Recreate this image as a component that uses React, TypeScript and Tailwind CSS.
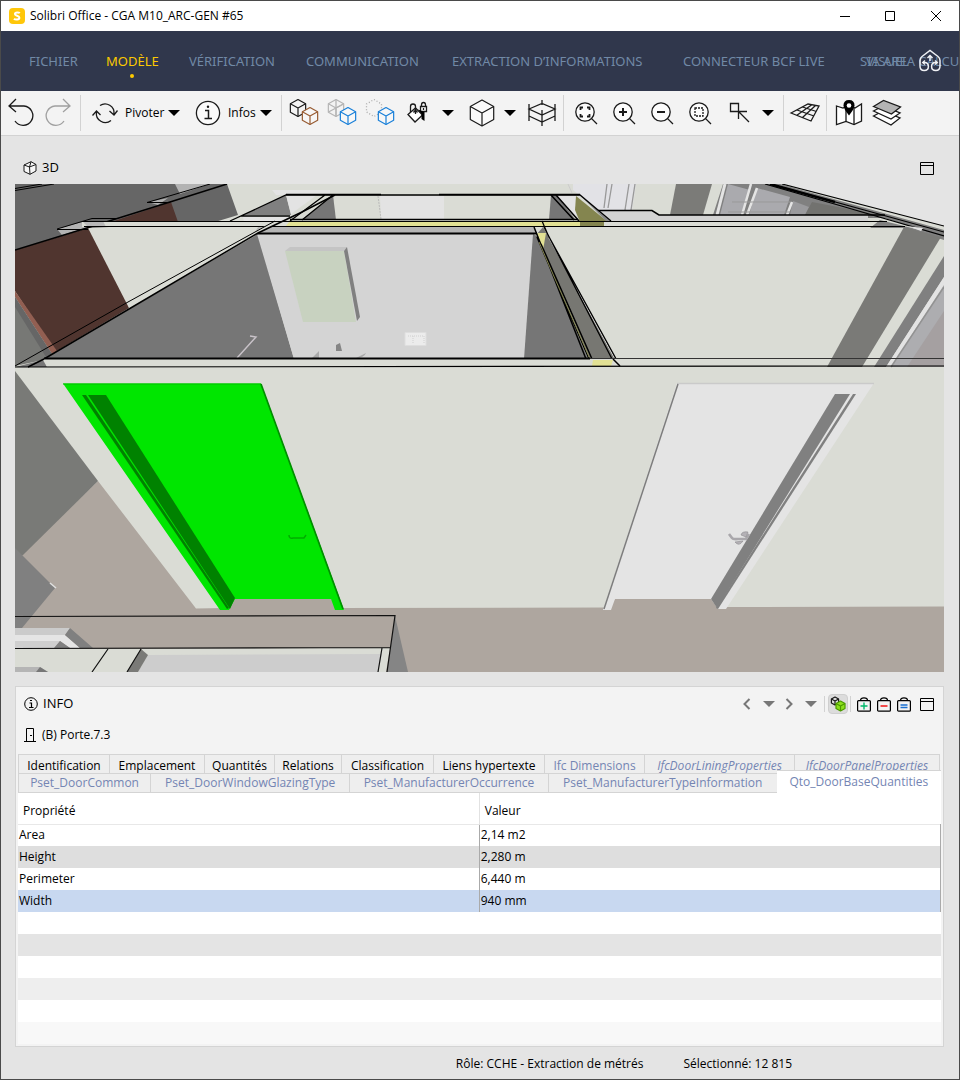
import { useState, type ReactNode } from 'react';

const MENU = [
  'FICHIER',
  'MODÈLE',
  'VÉRIFICATION',
  'COMMUNICATION',
  'EXTRACTION D’INFORMATIONS',
  'CONNECTEUR BCF LIVE',
];

const TABS_TOP = [
  { label: 'Identification', style: 'text-black' },
  { label: 'Emplacement', style: 'text-black' },
  { label: 'Quantités', style: 'text-black' },
  { label: 'Relations', style: 'text-black' },
  { label: 'Classification', style: 'text-black' },
  { label: 'Liens hypertexte', style: 'text-black' },
  { label: 'Ifc Dimensions', style: 'text-[#7485b3]' },
  { label: 'IfcDoorLiningProperties', style: 'text-[#7485b3] italic' },
  { label: 'IfcDoorPanelProperties', style: 'text-[#7485b3] italic' },
];

const TABS_BOTTOM = [
  'Pset_DoorCommon',
  'Pset_DoorWindowGlazingType',
  'Pset_ManufacturerOccurrence',
  'Pset_ManufacturerTypeInformation',
  'Qto_DoorBaseQuantities',
];

const ROWS = [
  { name: 'Area', value: '2,14 m2', bg: 'bg-white' },
  { name: 'Height', value: '2,280 m', bg: 'bg-[#dedede]' },
  { name: 'Perimeter', value: '6,440 m', bg: 'bg-white' },
  { name: 'Width', value: '940 mm', bg: 'bg-[#c8d8f0]' },
];

const EMPTY_ROWS = ['bg-white', 'bg-[#e4e4e4]', 'bg-white', 'bg-[#eeeeee]', 'bg-white', 'bg-[#f8f8f8]'];

function Cube({ cx, cy, r, color = '#1a1a1a', fill = 'none' }: { cx: number; cy: number; r: number; color?: string; fill?: string }) {
  const w = r * 0.9;
  const h = r * 0.5;
  return (
    <g stroke={color} fill={fill} strokeWidth="1.2" strokeLinejoin="round">
      <path d={`M${cx} ${cy - r}L${cx + w} ${cy - h}V${cy + h}L${cx} ${cy + r}L${cx - w} ${cy + h}V${cy - h}Z`} />
      <path d={`M${cx - w} ${cy - h}L${cx} ${cy}L${cx + w} ${cy - h}M${cx} ${cy}V${cy + r}`} fill="none" />
    </g>
  );
}

function Icon({ children }: { children: ReactNode }) {
  return (
    <svg viewBox="0 0 32 32" className="size-8 shrink-0" fill="none" stroke="#1a1a1a" strokeWidth="1.3">
      {children}
    </svg>
  );
}

function ToolButton({ label, children }: { label: string; children: ReactNode }) {
  return (
    <button type="button" aria-label={label} className="flex h-10 w-[38px] shrink-0 items-center justify-center">
      <Icon>{children}</Icon>
    </button>
  );
}

function Caret({ label }: { label: string }) {
  return (
    <button type="button" aria-label={label} className="flex h-10 w-3 shrink-0 items-center justify-center">
      <svg viewBox="0 0 12 6" className="h-1.5 w-3" fill="#000">
        <path d="M0 0H12L6 6Z" />
      </svg>
    </button>
  );
}

function Separator() {
  return <span className="h-9 w-px shrink-0 bg-[#d2d2d2]" />;
}

function Lens() {
  return (
    <g>
      <circle cx="15" cy="15" r="9.2" fill="#fbfbfb" />
      <path d="M21.6 21.6L27 27" />
    </g>
  );
}

function WindowIcon() {
  return (
    <svg viewBox="0 0 14 13" className="h-[13px] w-3.5" fill="none" stroke="#000">
      <path d="M0.5 0.5H13.5V12.5H0.5ZM0.5 3.5H13.5" />
    </svg>
  );
}

function TitleBar() {
  return (
    <header className="flex h-[30px] items-center bg-white pl-2">
      <svg viewBox="0 0 16 16" className="size-4">
        <rect width="16" height="16" rx="4" fill="#ffc70a" />
        <path d="M10.8 5.2C10 4.3 6 3.8 5.9 6C5.9 8 10.4 7.4 10.4 9.7C10.4 12 6.2 11.9 5 10.7" fill="none" stroke="#fff" strokeWidth="2" />
      </svg>
      <h1 className="ml-[5px] flex-1 font-['Open_Sans'] text-[12px] whitespace-nowrap">Solibri Office - CGA M10_ARC-GEN #65</h1>
      <button type="button" aria-label="Réduire" className="flex h-full w-[45px] items-center justify-center">
        <svg viewBox="0 0 12 12" className="size-3" stroke="#000"><path d="M1 6.5H11" /></svg>
      </button>
      <button type="button" aria-label="Agrandir" className="flex h-full w-[46px] items-center justify-center">
        <svg viewBox="0 0 12 12" className="size-3" fill="none" stroke="#000"><path d="M1.5 1.5H10.5V10.5H1.5Z" /></svg>
      </button>
      <button type="button" aria-label="Fermer" className="flex h-full w-[46px] items-center justify-center">
        <svg viewBox="0 0 12 12" className="size-3" stroke="#000"><path d="M1 1L11 11M11 1L1 11" /></svg>
      </button>
    </header>
  );
}

function MenuBar() {
  const [active, setActive] = useState('MODÈLE');
  return (
    <nav className="relative grid h-[60px] grid-cols-[77px_83px_117px_146px_231px_177px_auto] items-center justify-items-start overflow-hidden bg-[#30374c] pt-0.5 pl-7 font-['Noto_Sans'] text-[13px] text-[#7189a6]">
      {MENU.map((item) => (
        <button
          key={item}
          type="button"
          onClick={() => setActive(item)}
          className={`relative whitespace-nowrap ${item === active ? 'text-[#fdc900]' : ''}`}
        >
          {item}
          {item === active && <span className="absolute -bottom-1.5 left-1/2 size-1 -translate-x-1/2 rounded-full bg-[#fdc900]" />}
        </button>
      ))}
      {/* the last two entries share the same slot */}
      <span className="relative whitespace-nowrap">
        <button type="button">SIA AREA CALCUL</button>
        <button type="button" className="absolute top-0 left-1.5">VISUEL</button>
      </span>
      <svg viewBox="0 0 24 24" className="absolute top-[18px] right-[17px] size-6" fill="none" stroke="#f0f2f5" strokeWidth="1.5">
        <path d="M2 11.5Q2 9 4 7.500L12 1.500L20 7.500Q22 9 22 11.500V17Q22 21.500 17.800 21.500Q13.600 21.500 13.600 17.500Q13.600 13.500 17.500 13.500H19M2 11.500V17Q2 21.500 6.200 21.500Q10.400 21.500 10.400 17.500Q10.400 13.500 6.500 13.500H5" />
        <path d="M12 12V6.500M9.500 9L12 6.500L14.500 9M7 11.500L4.800 13.500L7 15.500M17 11.500L19.200 13.500L17 15.500" />
      </svg>
    </nav>
  );
}

function Toolbar() {
  return (
    <div className="flex h-[45px] items-center overflow-hidden border-b border-[#d2d2d2] bg-[#f3f3f3] font-['Open_Sans'] text-[12px]">
      <ToolButton label="Annuler">
        <path d="M12 2L5 9L12 15M5 9H20A9.700 9.700 0 1 1 11 24" />
      </ToolButton>
      <ToolButton label="Rétablir">
        <path d="M21 2L28 9L21 15M28 9H13A9.700 9.700 0 1 0 22 24" stroke="#a0a0a0" />
      </ToolButton>
      <span className="ml-[3px] flex"><Separator /></span>
      <button type="button" className="ml-2 flex w-[74px] shrink-0 items-center">
        <Icon>
          <path d="M11 8.500A9 9 0 0 1 25 17M20.500 14L25 18L28.500 13.500M22 23.500A9 9 0 0 1 7.500 15M3.500 18.500L7.500 14L11.500 18" />
        </Icon>
        <span className="ml-1 whitespace-nowrap">Pivoter</span>
      </button>
      <span className="ml-[5px] flex"><Caret label="Options de pivot" /></span>
      <button type="button" className="ml-3 flex w-16 shrink-0 items-center">
        <Icon>
          <circle cx="16" cy="16" r="11.600" fill="#fafafa" />
          <path d="M13 13.500H16.500V21.500M12.500 21.500H20" strokeWidth="1.500" />
          <circle cx="16" cy="9.800" r="1.200" fill="#1a1a1a" stroke="none" />
        </Icon>
        <span className="ml-1 whitespace-nowrap">Infos</span>
      </button>
      <span className="ml-1 flex"><Caret label="Options des infos" /></span>
      <span className="ml-[9px] flex"><Separator /></span>
      <span className="ml-[3px] flex">
        <ToolButton label="Ajouter des composants">
          <Cube cx={10} cy={11} r={8.5} color="#1a1a1a" fill="#f3f3f3" />
          <Cube cx={22} cy={19} r={8.5} color="#985c33" fill="#f7f7f7" />
        </ToolButton>
        <ToolButton label="Transparence">
          <Cube cx={10} cy={11} r={8.5} color="#b5b5b5" />
          <path d="M10 2.500V19.500M2.500 15L17.500 7" stroke="#b5b5b5" />
          <Cube cx={22} cy={19} r={8.5} color="#1a80d9" fill="#f7f7f7" />
        </ToolButton>
        <ToolButton label="Masquer">
          <path d="M10 2.500L17.500 7V15L10 19.500L2.500 15V7Z" stroke="#aaa" strokeDasharray="1 2" />
          <Cube cx={22} cy={19} r={8.5} color="#1a80d9" fill="#f7f7f7" />
        </ToolButton>
        <ToolButton label="Verrouiller les couleurs">
          <path d="M6 17.500L13.500 11L20.500 18L13 25Z" fill="#fff" />
          <path d="M8.500 15V9.500Q8.500 7 11 7Q13.500 7 13.500 9.500V17" />
          <path d="M11.500 15.500L13.500 13L15.500 15.500" />
          <path d="M19.500 9V8Q19.500 5.500 21.500 5.500Q23.500 5.500 23.500 8V9M18.500 9.500H24.500V14.500H18.500Z" fill="#fff" />
          <path d="M16 12.500L22.500 15V24L19.500 22V17Z" fill="#000" stroke="none" />
          <path d="M21.500 11V13" />
        </ToolButton>
      </span>
      <span className="ml-[5px] flex"><Caret label="Options de couleur" /></span>
      <span className="ml-[9px] flex">
        <ToolButton label="Vue 3D">
          <Cube cx={16} cy={16} r={13} fill="#fafafa" />
        </ToolButton>
      </span>
      <span className="ml-[3px] flex"><Caret label="Options de vue" /></span>
      <span className="ml-[7px] flex">
        <ToolButton label="Coupe">
          <path d="M3 7V24M29 7V24M16 3V8M16 13V29M3 12L16 6.500L29 12L16 18ZM3 19L16 25L29 19" />
        </ToolButton>
      </span>
      <span className="ml-[2px] flex"><Separator /></span>
      <span className="ml-[3px] flex">
        <ToolButton label="Zoom étendu">
          <Lens />
          <path d="M10.500 13V10.500H13M17 10.500H19.500V13M19.500 17V19.500H17M13 19.500H10.500V17" strokeWidth="1.800" />
        </ToolButton>
        <ToolButton label="Zoom avant">
          <Lens />
          <path d="M11 15H19M15 11V19" strokeWidth="2" />
        </ToolButton>
        <ToolButton label="Zoom arrière">
          <Lens />
          <path d="M11 15H19" strokeWidth="2" />
        </ToolButton>
        <ToolButton label="Zoom fenêtre">
          <Lens />
          <path d="M11 11H19V19H11Z" strokeDasharray="2 1" />
        </ToolButton>
        <ToolButton label="Sélection">
          <path d="M8.500 6.500H16.500V14.500H8.500ZM16.500 22V14.500H25M16.500 14.500L27 25" />
        </ToolButton>
      </span>
      <span className="ml-[5px] flex"><Caret label="Options de sélection" /></span>
      <span className="ml-[9px] flex"><Separator /></span>
      <span className="ml-0.5 flex">
        <ToolButton label="Grille">
          <path d="M2 16L19 7L30 9L22 24ZM7.500 18.500L22.500 8M13.500 20.500L26.500 8.500M8 13L25 19M13.500 10L27.500 14.500" />
        </ToolButton>
      </span>
      <span className="ml-[2px] flex"><Separator /></span>
      <span className="ml-[3px] flex">
        <ToolButton label="Carte">
          <path d="M3.500 9L10 11L16 8L22 11L28.500 7V24L21 27.500L13 24.500L3.500 27.500Z" fill="#fff" />
          <path d="M13 10V24.500M21 10.500V27.500" />
          <path d="M16 3Q21.500 3 21.500 8.500Q21.500 11.500 16 18.500Q10.500 11.500 10.500 8.500Q10.500 3 16 3Z" fill="#000" stroke="none" />
          <circle cx="16" cy="8.500" r="2.300" fill="#fff" stroke="none" />
        </ToolButton>
        <ToolButton label="Calques">
          <path d="M2.500 19L12 14L29 21L20 28Z" fill="#fff" />
          <path d="M2.500 14L12 9L29 16L20 22Z" fill="#fff" />
          <path d="M2.500 9.500L12.500 3.500L29.500 10L20.500 17Z" fill="#b4b4b4" />
        </ToolButton>
      </span>
    </div>
  );
}

// Scene coordinates are kept in viewport units, the drawing scales with its panel
function Scene() {
  return (
    <svg viewBox="15 184 929 488" className="block h-auto w-full" role="img" aria-label="Vue 3D du modèle">
      <rect x="15" y="184" width="929" height="488" fill="#dadcd5" />

      {/* upper left rooms */}
      <path d="M15 184H227L238 215L215 222L88 228L15 250Z" fill="#666" />
      <path d="M175 184H210L180 194ZM148 202L168 198L158 205ZM57 229L82 222L92 226L62 235Z" fill="#b3b3b3" />
      <path d="M114 221L171 202L178 222Z" fill="#50352f" />
      <path d="M15 250L88 228L129 308L55 352L15 291Z" fill="#50352f" />
      <path d="M15 291L57 351L52 354L15 297Z" fill="#925f52" />
      <path d="M15 297L52 354L43 360L15 366Z" fill="#777875" />
      <path d="M15 297L52 354L46 357L15 307Z" fill="#666" />
      <path d="M82 222H103L105 227H92Z" fill="#bcbcbc" />
      <path d="M43 360L47 367H15Z" fill="#777" />
      <g fill="none" stroke="#000">
        <path d="M15 188.500L42 184M15 190.500L54 184M147 202.500L210 184" />
        <path d="M15 250L90 227L170 202L227 184" strokeWidth="1.500" />
        <path d="M57 229L92 218.500H116" />
        <path d="M147 202.500H170M57 229.500H88" />
      </g>

      {/* back rooms behind the long wall */}
      <path d="M272 190H330V195H276Z" fill="#e4e4e4" />
      <path d="M243 215L286 195L291 215Z" fill="#808080" />
      <path d="M286 195H317L291 214Z" fill="#e3e3e3" />
      <path d="M243 217H290L280 222H244Z" fill="#e3e3e3" />
      <path d="M302 220L333 195L336 220Z" fill="#767676" />
      <path d="M380 196H444V219H381Z" fill="#e3e3e3" />
      <path d="M378 196L381 219" stroke="#bbb" strokeDasharray="2 1" />
      <path d="M551 195H556L576 220H549Z" fill="#767676" />
      <path d="M556 195H576V219Z" fill="#e4e4e4" />
      <path d="M576 196L608 222H580L575 210Z" fill="#84854f" />
      <path d="M580 195L586 195L611 221H606Z" fill="#8a8a8a" />
      <path d="M573 184H636L632 210H598L573 190Z" fill="#e2e2e6" />
      <path d="M607 184L604 208M612 184L608 208M629 184L625 210M635 184L631 210" stroke="#999" strokeWidth="1.300" />
      <path d="M568 184L572 193" stroke="#ccc" />
      <path d="M676 184H712L703 215H670Z" fill="#7b7b78" />
      <path d="M723 184H780L944 230V238L885 218H712Z" fill="#808080" />
      <path d="M725 184L717 215" stroke="#e4e4e4" strokeWidth="3" />
      <path d="M728 184L750 190L742 215H720Z" fill="#aaaaae" />
      <path d="M757 188L790 197L784 215H749Z" fill="#aaaaae" />
      <path d="M793 201L809 207L805 215H790Z" fill="#9a9a9d" />
      <path d="M751 184L742 215M757 188L747 215M792 202L787 215" stroke="#e4e4e4" strokeWidth="2.500" />
      <path d="M812 202L880 215H805Z" fill="#72726f" />
      <path d="M732 202H790M728 212H790" stroke="#999" />
      <path d="M598 211H652L658 215H868V221H610Z" fill="#d3d3d3" />
      <path d="M598 210.500H652L659 215H885" fill="none" stroke="#000" strokeWidth="1.500" />

      {/* long wall top and cavity */}
      <path d="M82 221H885V227H82Z" fill="#dadcd5" />
      <path d="M82 221H103L106 227H88Z" fill="#b8b8b8" />
      <path d="M290 221H604V227H285Z" fill="#e2e194" />
      <path d="M580 221H604V227H580Z" fill="#84854f" />
      <path d="M258 227H533L537 234H254Z" fill="#b5b5b5" />
      <path d="M784 184H944V226Z" fill="#e4e4e4" />
      <path d="M880 220L944 236V240L905 228H870Z" fill="#808080" />
      <g fill="none" stroke="#000">
        <path d="M82 221.500H887M84 226.500H905" />
        <path d="M230 221L286 195H580L611 221M333 195L302 220M325 195L290 221M241 216H290" strokeWidth="1.300" />
        <path d="M551 195L574 220M556 195L579 221M286 194.500H381M439 194.500H580" strokeWidth="1.500" />
        <path d="M290 219.500H578" strokeWidth="1.300" />
        <path d="M782 184L944 226M770 184L944 232M765 184L838 205L944 236" strokeWidth="1.200" />
      </g>
      <path d="M770 184L835 202" stroke="#000" strokeWidth="2.500" />
      <path d="M907 226L923 228L921 231Z" fill="#e4e4e4" />

      {/* open room */}
      <path d="M44 359L258 234L294 359Z" fill="#767676" />
      <path d="M257 234H533L525 359H294Z" fill="#d4d4d4" />
      <path d="M285 251L290 247H347L344 251Z" fill="#c4c4c4" />
      <path d="M285 251H344L356 322H303Z" fill="#c8d2c0" />
      <path d="M344 251L347 247L360 317L357 321Z" fill="#808080" />
      <path d="M405 332.500H426V345.500H405Z" fill="#ececec" stroke="#dedede" />
      <path d="M408 336H424V343M413 336V343" fill="none" stroke="#d0d0d0" strokeDasharray="1 1" />
      <path d="M336 345L340 343L342 351H336Z" fill="#858585" />
      <path d="M237 358L256 337L250 336" fill="none" stroke="#c9c3c9" strokeWidth="1.500" />
      <path d="M312 358L319 351V358ZM356 358Q364 358 366 353" fill="#aaa" />
      <path d="M533 234L537 236L588 359H524Z" fill="#767676" />
      <path d="M543 227L620 366H593L537 234Z" fill="#777772" />
      <path d="M537 233H546L543 250Z" fill="#e2e194" />
      <path d="M615 359L549 238" stroke="#e4e4e4" strokeWidth="1" />
      <g fill="none" stroke="#000">
        <path d="M534 227L586 359M537 237L589 359M541 244L592 359" strokeWidth="1.500" />
        <path d="M539 242L590 359" stroke="#84854f" strokeWidth="1" />
        <path d="M542 221L548 235L620 366M544 227L612 359" strokeWidth="1.300" />
        <path d="M257 233.500H537" strokeWidth="2" />
      </g>
      <path d="M129 308L258 233L280 222L263 227L128 302Z" fill="#dadcd5" />
      <path d="M15 366L128 302L275 221" fill="none" stroke="#000" />
      <path d="M28 367L44 359L129 309L258 233L302 212L335 195" fill="none" stroke="#000" strokeWidth="1.500" />

      {/* right hand wall */}
      <path d="M904 227L941 237L862 367H827Z" fill="#7a7a77" />
      <path d="M944 256V277L886 367H874Z" fill="#808080" />
      <path d="M944 277V285L891 367H886Z" fill="#e3e3e3" />
      <path d="M944 285V367H891Z" fill="#adadb0" />
      <path d="M944 311V367H907Z" fill="#a5a0a1" />
      <path d="M944 287L891 367" stroke="#929292" strokeWidth="1.500" />

      {/* front wall top edge */}
      <path d="M44 359H827V367H47Z" fill="#dadcd5" />
      <path d="M593 360H613L611 366H592Z" fill="#e2e194" />
      <path d="M613 359L620 366" stroke="#000" strokeWidth="1.500" />
      <path d="M44 358.500H590" stroke="#000" strokeWidth="1.800" />
      <path d="M590 358.500H944" stroke="#333" />
      <path d="M15 367L944 366" stroke="#000" strokeWidth="1.200" />

      {/* floor and left side */}
      <path d="M98 481L196 608.500L225 608L235 599H331L337 608L607 607.500L615 599H711L717 607L944 606.500V672H15V560Z" fill="#aea69f" />
      <path d="M15 371L98 481L23 555L15 560Z" fill="#797a77" />
      <path d="M15 548L55 588L22 628L15 636Z" fill="#808080" />
      <path d="M50 583L56 588" stroke="#e0e0e0" strokeWidth="1.500" />

      {/* selected door */}
      <path d="M63 383.500H261L344 610H335L331 599H235L229 610H220Z" fill="#00e600" />
      <path d="M63 384H261" stroke="#00c000" />
      <path d="M261 384L343 609" stroke="#008f00" strokeWidth="1.700" />
      <path d="M88 395H106L235 598L230 609Z" fill="#008200" />
      <path d="M82 395H86L229 608L227 609Z" fill="#008200" />
      <path d="M289 535Q289 539 293 538H304L306 535" fill="none" stroke="#00ad00" strokeWidth="1.500" />

      {/* white door */}
      <path d="M677 383H874L726 609H718L711 599H615L611 610H603Z" fill="#e4e4e4" />
      <path d="M677 383.500H874" stroke="#cacaca" strokeWidth="1.500" />
      <path d="M678 384L604 609" stroke="#7d7d7d" strokeWidth="1.500" />
      <path d="M835 394H850L717 608L711 599Z" fill="#808080" />
      <path d="M853 394H856L718 609L716 608Z" fill="#808080" />
      <path d="M729 534L732 538Q733 539.500 738 539H746L749 534" fill="none" stroke="#a9a7ab" strokeWidth="2.600" />
      <path d="M741 535Q742 531 748 532L746 537ZM735 542Q739 547 743 541Z" fill="#b4b1b6" stroke="#8d8b8f" strokeWidth="0.600" />

      {/* lower wall and windows */}
      <path d="M15 628H70L65 635H15Z" fill="#cbcbcb" />
      <path d="M15 635H65L80 648H70L60 641H15Z" fill="#e5e5e5" />
      <path d="M15 641H60L55 648H15Z" fill="#cfcfcf" />
      <path d="M70 628L93 648H80L65 635ZM60 641L70 648H54Z" fill="#808080" />
      <path d="M15 649L390 648L386 672H15Z" fill="#dadcd5" />
      <path d="M148 655L382 654L378 672H138Z" fill="#cdcdcd" />
      <path d="M141 649L148 655L138 672H127Z" fill="#7a7a77" />
      <path d="M15 667H40L48 672H15Z" fill="#b5b5b5" />
      <path d="M36 672L40 667L48 672Z" fill="#777" />
      <path d="M395 616L408 672H387Z" fill="#858585" />
      <path d="M15 616.500L395 615.500L387 672M15 648.500L390 647.500M108 649L92 672M141 649L127 672M382 648L378 672" fill="none" stroke="#111" strokeWidth="1.200" />
    </svg>
  );
}

function BasketIcon({ sign, color }: { sign: string; color: string }) {
  return (
    <svg viewBox="0 0 14 15" className="h-[15px] w-3.5" fill="none" stroke="#000" strokeWidth="1.200">
      <rect x="0.600" y="3.600" width="12.800" height="10.600" rx="1" />
      <path d="M3.500 3.500Q3.500 0.800 7 0.800Q10.500 0.800 10.500 3.500" />
      <path d={sign} stroke={color} strokeWidth="1.400" />
    </svg>
  );
}

function InfoPanel() {
  const [tab, setTab] = useState('Qto_DoorBaseQuantities');
  return (
    <section className="mt-3.5 mr-[15px] ml-3.5 border border-[#d4d4d4] bg-[#f3f3f3] px-0.5 pb-0.5">
      <div className="flex h-[34px] items-center pr-[7px] pl-1.5">
        <svg viewBox="0 0 14 14" className="size-3.5" fill="none" stroke="#000">
          <circle cx="7" cy="7" r="6.300" />
          <path d="M5.500 6H7.500V10.500M5 10.500H9.500M6 3.500H8" strokeWidth="1.200" />
        </svg>
        <h2 className="ml-[5px] flex-1 text-[13px]">INFO</h2>
        <div className="flex items-center text-[#777]">
          <button type="button" aria-label="Précédent">
            <svg viewBox="0 0 8 12" className="h-3 w-2" fill="none" stroke="currentColor" strokeWidth="2"><path d="M6.500 1L1.500 6L6.500 11" /></svg>
          </button>
          <button type="button" aria-label="Historique précédent" className="ml-3">
            <svg viewBox="0 0 12 6" className="h-1.5 w-3" fill="currentColor"><path d="M0 0H12L6 6Z" /></svg>
          </button>
          <button type="button" aria-label="Suivant" className="ml-2.5">
            <svg viewBox="0 0 8 12" className="h-3 w-2" fill="none" stroke="currentColor" strokeWidth="2"><path d="M1.500 1L6.500 6L1.500 11" /></svg>
          </button>
          <button type="button" aria-label="Historique suivant" className="ml-3">
            <svg viewBox="0 0 12 6" className="h-1.5 w-3" fill="currentColor"><path d="M0 0H12L6 6Z" /></svg>
          </button>
          <span className="ml-[7px] h-4 w-px bg-[#d2d2d2]" />
          <button type="button" aria-label="Suivre la sélection" className="ml-[3px] flex size-5 items-center justify-center rounded-sm border border-[#cfcfcf] bg-[#dcdcdc]">
            <svg viewBox="0 0 16 16" className="size-4">
              <Cube cx={5} cy={5} r={4} />
              <Cube cx={10.5} cy={10} r={5} color="#4c9a00" fill="#8ce01c" />
            </svg>
          </button>
          <span className="ml-0.5 h-4 w-px bg-[#d2d2d2]" />
          <button type="button" aria-label="Ajouter au panier" className="ml-1.5"><BasketIcon sign="M3.500 9H10.500M7 5.500V12.500" color="#00b86b" /></button>
          <button type="button" aria-label="Retirer du panier" className="ml-1.5"><BasketIcon sign="M3.500 9H10.500" color="#f00000" /></button>
          <button type="button" aria-label="Définir le panier" className="ml-1.5"><BasketIcon sign="M3.500 8H10.500M3.500 10.500H10.500" color="#1a6fd0" /></button>
          <button type="button" aria-label="Agrandir le panneau" className="ml-[9px]"><WindowIcon /></button>
        </div>
      </div>
      <div className="flex h-[33px] items-center pb-1.5 pl-1.5 text-[12px]">
        <svg viewBox="0 0 12 14" className="h-3.5 w-3" fill="none" stroke="#000">
          <path d="M0 13.500H12M2.500 13.500V0.500H9.500V13.500M6 7.500H8" />
        </svg>
        <span className="ml-1.5">(B) Porte.7.3</span>
      </div>

      <div role="tablist" className="text-[12px] whitespace-nowrap">
        <div className="mr-px grid h-[19px] grid-cols-[91fr_95fr_70fr_67fr_92fr_111fr_100fr_150fr_145fr] overflow-hidden border-t border-r border-[#d4d4d4]">
          {TABS_TOP.map((t) => (
            <button key={t.label} type="button" role="tab" aria-selected={false} className={`flex h-6 justify-center border-l border-[#d4d4d4] bg-[#eee] pt-0.5 ${t.style}`}>
              {t.label}
            </button>
          ))}
        </div>
        <div className="grid grid-cols-[132fr_199fr_198fr_229fr_164fr] grid-rows-[20px] items-end text-[#7485b3]">
          {TABS_BOTTOM.map((t) => (
            <button
              key={t}
              type="button"
              role="tab"
              aria-selected={t === tab}
              onClick={() => setTab(t)}
              className={t === tab
                ? 'flex h-[23px] items-center justify-center border-t border-[#d4d4d4] bg-white'
                : 'flex h-5 items-center justify-center border-t border-b border-l border-[#d4d4d4] bg-[#eee]'}
            >
              {t}
            </button>
          ))}
        </div>
      </div>

      <table className="w-full table-fixed border-collapse bg-white text-left text-[12px]">
        <thead>
          <tr className="h-[31px] border-b border-[#e8e8e8]">
            <th className="border-r border-[#e2e2e2] pt-1.5 pl-[5px] font-normal">Propriété</th>
            <th className="pt-1.5 pl-[5px] font-normal">Valeur</th>
          </tr>
        </thead>
        <tbody>
          {ROWS.map((row) => (
            <tr key={row.name} className={`h-[22px] ${row.bg}`}>
              <td className="border-r border-[#aaa] pl-px">{row.name}</td>
              <td className="border-r border-[#aaa] pl-px">{row.value}</td>
            </tr>
          ))}
          {EMPTY_ROWS.map((bg, i) => (
            <tr key={i} className={`h-[22px] ${bg}`}>
              <td colSpan={2} />
            </tr>
          ))}
        </tbody>
      </table>
    </section>
  );
}

export default function App() {
  return (
    <div className="min-h-screen border border-[#4a4a4a] bg-[#e4e4e4] font-['Open_Sans','Noto_Sans',sans-serif] text-black">
      <TitleBar />
      <MenuBar />
      <Toolbar />
      <main>
        <section className="mr-[15px] ml-3.5">
          <div className="flex h-12 items-center pt-4 pr-2.5 pl-2">
            <svg viewBox="0 0 14 14" className="size-3.5" fill="#f7f7f7" stroke="#1a1a1a" strokeLinejoin="round">
              <path d="M1 4L8 0.700L13 3.500V10L7 13.300L1 10.500Z" />
              <path d="M1 4L6.500 6L13 3.500M6.500 6L7 13.300M6.500 6L8 0.700" fill="none" />
            </svg>
            <h2 className="ml-[5px] flex-1 text-[13px]">3D</h2>
            <button type="button" aria-label="Agrandir la vue"><WindowIcon /></button>
          </div>
          <Scene />
        </section>
        <InfoPanel />
      </main>
      <footer className="flex h-8 items-center justify-end gap-10 pt-0.5 pr-[167px] text-[12px]">
        <span>Rôle: CCHE - Extraction de métrés</span>
        <span>Sélectionné: 12 815</span>
      </footer>
    </div>
  );
}
